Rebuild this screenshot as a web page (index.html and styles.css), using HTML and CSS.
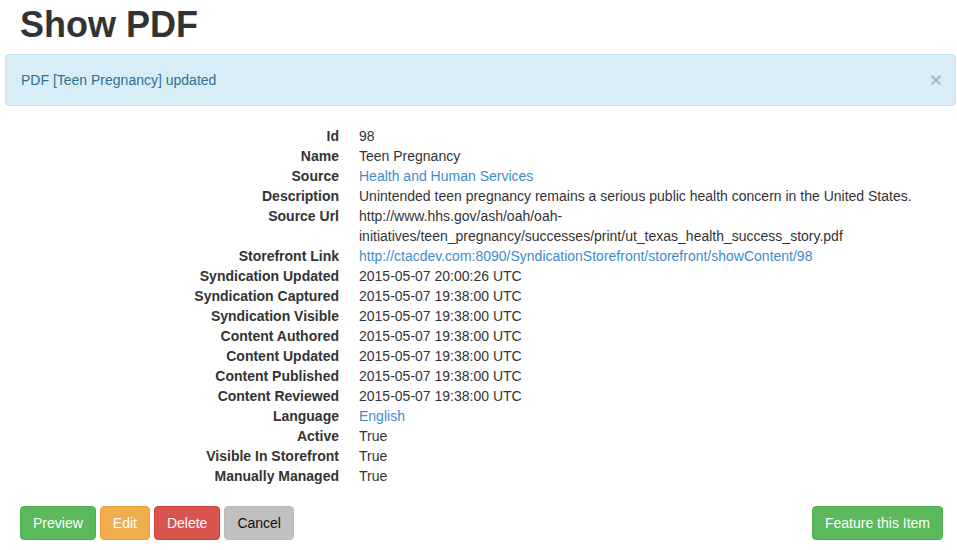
FILE: index.html
```html
<!DOCTYPE html>
<html>
<head>
<meta charset="utf-8">
<title>Show PDF</title>
<link rel="stylesheet" href="styles.css">
</head>
<body>
<div class="page">
  <h1 class="title">Show PDF</h1>
  <div class="alert">
    <span>PDF [Teen Pregnancy] updated</span>
    <span class="close">&times;</span>
  </div>
  <dl class="details">
    <dt>Id</dt><dd>98</dd>
    <dt>Name</dt><dd>Teen Pregnancy</dd>
    <dt>Source</dt><dd><a href="#">Health and Human Services</a></dd>
    <dt>Description</dt><dd>Unintended teen pregnancy remains a serious public health concern in the United States.</dd>
    <dt>Source Url</dt><dd><span class="nw">http://www.hhs.gov/ash/oah/oah-</span><br><span class="nw">initiatives/teen_pregnancy/successes/print/ut_texas_health_success_story.pdf</span></dd>
    <dt>Storefront Link</dt><dd><a href="#">http://ctacdev.com:8090/SyndicationStorefront/storefront/showContent/98</a></dd>
    <dt>Syndication Updated</dt><dd>2015-05-07 20:00:26 UTC</dd>
    <dt>Syndication Captured</dt><dd>2015-05-07 19:38:00 UTC</dd>
    <dt>Syndication Visible</dt><dd>2015-05-07 19:38:00 UTC</dd>
    <dt>Content Authored</dt><dd>2015-05-07 19:38:00 UTC</dd>
    <dt>Content Updated</dt><dd>2015-05-07 19:38:00 UTC</dd>
    <dt>Content Published</dt><dd>2015-05-07 19:38:00 UTC</dd>
    <dt>Content Reviewed</dt><dd>2015-05-07 19:38:00 UTC</dd>
    <dt>Language</dt><dd><a href="#">English</a></dd>
    <dt>Active</dt><dd>True</dd>
    <dt>Visible In Storefront</dt><dd>True</dd>
    <dt>Manually Managed</dt><dd>True</dd>
  </dl>
  <div class="actions">
    <div class="group">
      <button class="btn btn-success">Preview</button>
      <button class="btn btn-warning">Edit</button>
      <button class="btn btn-danger">Delete</button>
      <button class="btn btn-default">Cancel</button>
    </div>
    <button class="btn btn-success">Feature this Item</button>
  </div>
</div>
</body>
</html>
```
FILE: styles.css
```css
* { box-sizing: border-box; }
html, body { margin: 0; padding: 0; background: #fff; }
body {
  font-family: "Liberation Sans", Arial, Helvetica, sans-serif;
  font-size: 14px;
  line-height: 20px;
  color: #333;
}
.page { padding: 0 1px 0 5px; }
.title {
  font-size: 36px;
  font-weight: 700;
  line-height: 40px;
  margin: 0 0 9px;
  padding: 5px 0 0 15px;
  color: #333;
}
.alert {
  display: flex;
  justify-content: space-between;
  align-items: center;
  background: #d9edf7;
  border: 1px solid #bce8f1;
  border-radius: 4px;
  color: #31708f;
  padding: 15px 13px 15px 15px;
  margin-bottom: 20px;
  height: 52px;
}
.close {
  font-size: 21px;
  font-weight: 700;
  line-height: 1;
  color: #000;
  opacity: 0.2;
  margin-top: -2px;
}
.details {
  display: grid;
  grid-template-columns: 160px 1fr;
  column-gap: 20px;
  margin: 0 0 20px;
  padding-left: 174px;
  padding-right: 10px;
}
.details dt {
  font-weight: 700;
  text-align: right;
  white-space: nowrap;
}
.details dd { margin: 0; }
.nw { white-space: nowrap; }
a { color: #428bca; text-decoration: none; }
.actions {
  display: flex;
  justify-content: space-between;
  padding: 0 13px 0 15px;
}
.group { display: flex; gap: 4px; }
.btn {
  font-family: inherit;
  font-size: 14px;
  line-height: 20px;
  padding: 6px 12px;
  border: 1px solid transparent;
  border-radius: 4px;
  color: #fff;
  height: 34px;
  cursor: pointer;
}
.btn-success { background: #5cb85c; border-color: #4cae4c; }
.btn-warning { background: #f0ad4e; border-color: #eea236; }
.btn-danger { background: #d9534f; border-color: #d43f3a; }
.btn-default { background: #c0c0c0; border-color: #bbb; color: #111; }
```
